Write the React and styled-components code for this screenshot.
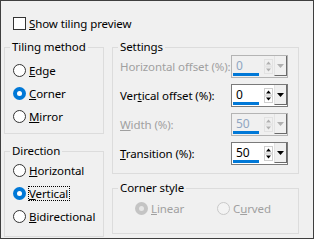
import React from "react";
import styled, { createGlobalStyle } from "styled-components";

const GlobalStyle = createGlobalStyle`
  html, body {
    margin: 0;
    padding: 0;
    background: #ffffff;
  }

  body {
    font: 11.5px "Noto Sans", "Liberation Sans", sans-serif;
    letter-spacing: -0.1px;
    color: #000;
  }
`;

const Dialog = styled.div`
  box-sizing: border-box;
  width: 314px;
  height: 239px;
  border: 1px solid #3f3f3f;
  background: #f0f0f0;
  padding: 14px 0 0 3px;
`;

const CheckRow = styled.label`
  display: flex;
  align-items: center;
  gap: 3px;
  height: 16px;
  margin-left: 9px;
`;

const CheckBox = styled.span`
  box-sizing: border-box;
  width: 13px;
  height: 13px;
  border: 1px solid #333;
  background: #fff;
`;

const Columns = styled.div`
  display: flex;
  gap: 8px;
  margin-top: 9px;
`;

const Column = styled.div`
  display: flex;
  flex-direction: column;
  gap: ${(p) => p.gap}px;
  width: ${(p) => p.width}px;
`;

const Group = styled.fieldset`
  margin: 0;
  min-width: 0;
  padding: 0;
  border: 1px solid #dcdcdc;
`;

const Legend = styled.legend`
  margin-left: 5px;
  padding: 0 2px;
  line-height: 14px;
`;

const GroupBody = styled.div`
  padding: ${(p) => p.pad};
`;

const Radio = styled.div`
  display: flex;
  align-items: center;
  gap: 2px;
  height: 23px;
  width: ${(p) => (p.width ? `${p.width}px` : "auto")};
  color: ${(p) => (p.disabled ? "#a0a0a0" : "#000")};
`;

const RadioText = styled.span`
  border: 1px ${(p) => (p.focused ? "dotted #000" : "solid transparent")};
  padding: 0 1px 0 0;
  line-height: 13px;
  white-space: nowrap;
`;

const InlineRow = styled.div`
  display: flex;
`;

const SpinRows = styled.div`
  display: flex;
  flex-direction: column;
  gap: 6px;
`;

const SpinRow = styled.div`
  display: flex;
  align-items: center;
  justify-content: space-between;
  height: 23px;
  color: ${(p) => (p.disabled ? "#a0a0a0" : "#000")};
  line-height: 14px;
  white-space: nowrap;
`;

const SpinBox = styled.div`
  box-sizing: border-box;
  display: flex;
  flex-shrink: 0;
  width: 57px;
  height: 23px;
  border: 1px solid ${(p) => (p.disabled ? "#b4b4b4" : "#7a7a7a")};
  background: ${(p) => (p.disabled ? "#f0f0f0" : "#fff")};
`;

const Field = styled.div`
  display: flex;
  flex-direction: column;
  width: 31px;
`;

const Value = styled.span`
  flex: 1;
  padding: 3px 0 0 4px;
  font-size: 12px;
  line-height: 14px;
  color: ${(p) => (p.disabled ? "#8fa6c2" : "#000")};
`;

const Bar = styled.div`
  height: 3px;
  margin: 0 4px 1px 1px;
  background: #0078d7;
`;

const Arrows = styled.div`
  display: flex;
  align-items: center;
  justify-content: center;
  width: 11px;
`;

const DropButton = styled.div`
  box-sizing: border-box;
  display: flex;
  align-items: center;
  justify-content: center;
  width: 13px;
  height: 20px;
  border-left: 1px solid #e3e3e3;
  border-right: 1px solid #6a6a6a;
  border-bottom: 1px solid #6a6a6a;
  background: #f0f0f0;
`;

const RadioDot = ({ checked, disabled }) => (
  <svg width="13" height="13" viewBox="0 0 13 13">
    {checked ? (
      <>
        <circle cx="6.5" cy="6.5" r="6.5" fill={disabled ? "#c4c4c4" : "#0078d7"} />
        <circle cx="6.5" cy="6.5" r="2.5" fill={disabled ? "#e6e6e6" : "#fff"} />
      </>
    ) : (
      <circle
        cx="6.5"
        cy="6.5"
        r="6"
        fill={disabled ? "#f3f3f3" : "#fff"}
        stroke={disabled ? "#c8c8c8" : "#333"}
      />
    )}
  </svg>
);

const Option = ({ label, checked, disabled, focused, width }) => (
  <Radio disabled={disabled} width={width}>
    <RadioDot checked={checked} disabled={disabled} />
    <RadioText focused={focused}>{label}</RadioText>
  </Radio>
);

const Spinner = ({ label, value, disabled }) => {
  const ink = disabled ? "#b0b0b0" : "#000";
  const edge = disabled ? "#e2e2e2" : "#cfcfcf";
  return (
    <SpinRow disabled={disabled}>
      <span>{label}</span>
      <SpinBox disabled={disabled}>
        <Field>
          <Value disabled={disabled}>{value}</Value>
          <Bar />
        </Field>
        <Arrows>
          <svg width="11" height="19" viewBox="0 0 11 19">
            <rect x="1.5" y="2.5" width="8" height="6.5" fill="none" stroke={edge} />
            <rect x="1.5" y="10" width="8" height="6.5" fill="none" stroke={edge} />
            <path d="M3 7.5h5L5.5 4.5z" fill={ink} />
            <path d="M3 11.5h5L5.5 14.5z" fill={ink} />
          </svg>
        </Arrows>
        <DropButton>
          <svg width="7" height="4" viewBox="0 0 7 4">
            <path d="M0 0h7L3.5 4z" fill={ink} />
          </svg>
        </DropButton>
      </SpinBox>
    </SpinRow>
  );
};

export default function App() {
  return (
    <>
      <GlobalStyle />
      <Dialog>
        <CheckRow>
          <CheckBox />
          <span>
            <u>S</u>how tiling preview
          </span>
        </CheckRow>
        <Columns>
          <Column width={100} gap={10}>
            <Group>
              <Legend>Tiling method</Legend>
              <GroupBody pad="5px 0 5px 8px">
                <Option label={<><u>E</u>dge</>} />
                <Option label={<><u>C</u>orner</>} checked />
                <Option label={<><u>M</u>irror</>} />
              </GroupBody>
            </Group>
            <Group>
              <Legend>Direction</Legend>
              <GroupBody pad="1px 0 8px 8px">
                <Option label={<><u>H</u>orizontal</>} />
                <Option label={<><u>V</u>ertical</>} checked focused />
                <Option label={<><u>B</u>idirectional</>} />
              </GroupBody>
            </Group>
          </Column>
          <Column width={187} gap={7}>
            <Group>
              <Legend>Settings</Legend>
              <GroupBody pad="1px 10px 8px 7px">
                <SpinRows>
                  <Spinner label="Horizontal offset (%):" value="0" disabled />
                  <Spinner label={<>Ver<u>t</u>ical offset (%):</>} value="0" />
                  <Spinner label={<><u>W</u>idth (%):</>} value="50" disabled />
                  <Spinner label={<><u>T</u>ransition (%):</>} value="50" />
                </SpinRows>
              </GroupBody>
            </Group>
            <Group>
              <Legend>Corner style</Legend>
              <GroupBody pad="2px 0 13px 22px">
                <InlineRow>
                  <Option label={<><u>L</u>inear</>} checked disabled width={82} />
                  <Option label={<>C<u>u</u>rved</>} disabled />
                </InlineRow>
              </GroupBody>
            </Group>
          </Column>
        </Columns>
      </Dialog>
    </>
  );
}
